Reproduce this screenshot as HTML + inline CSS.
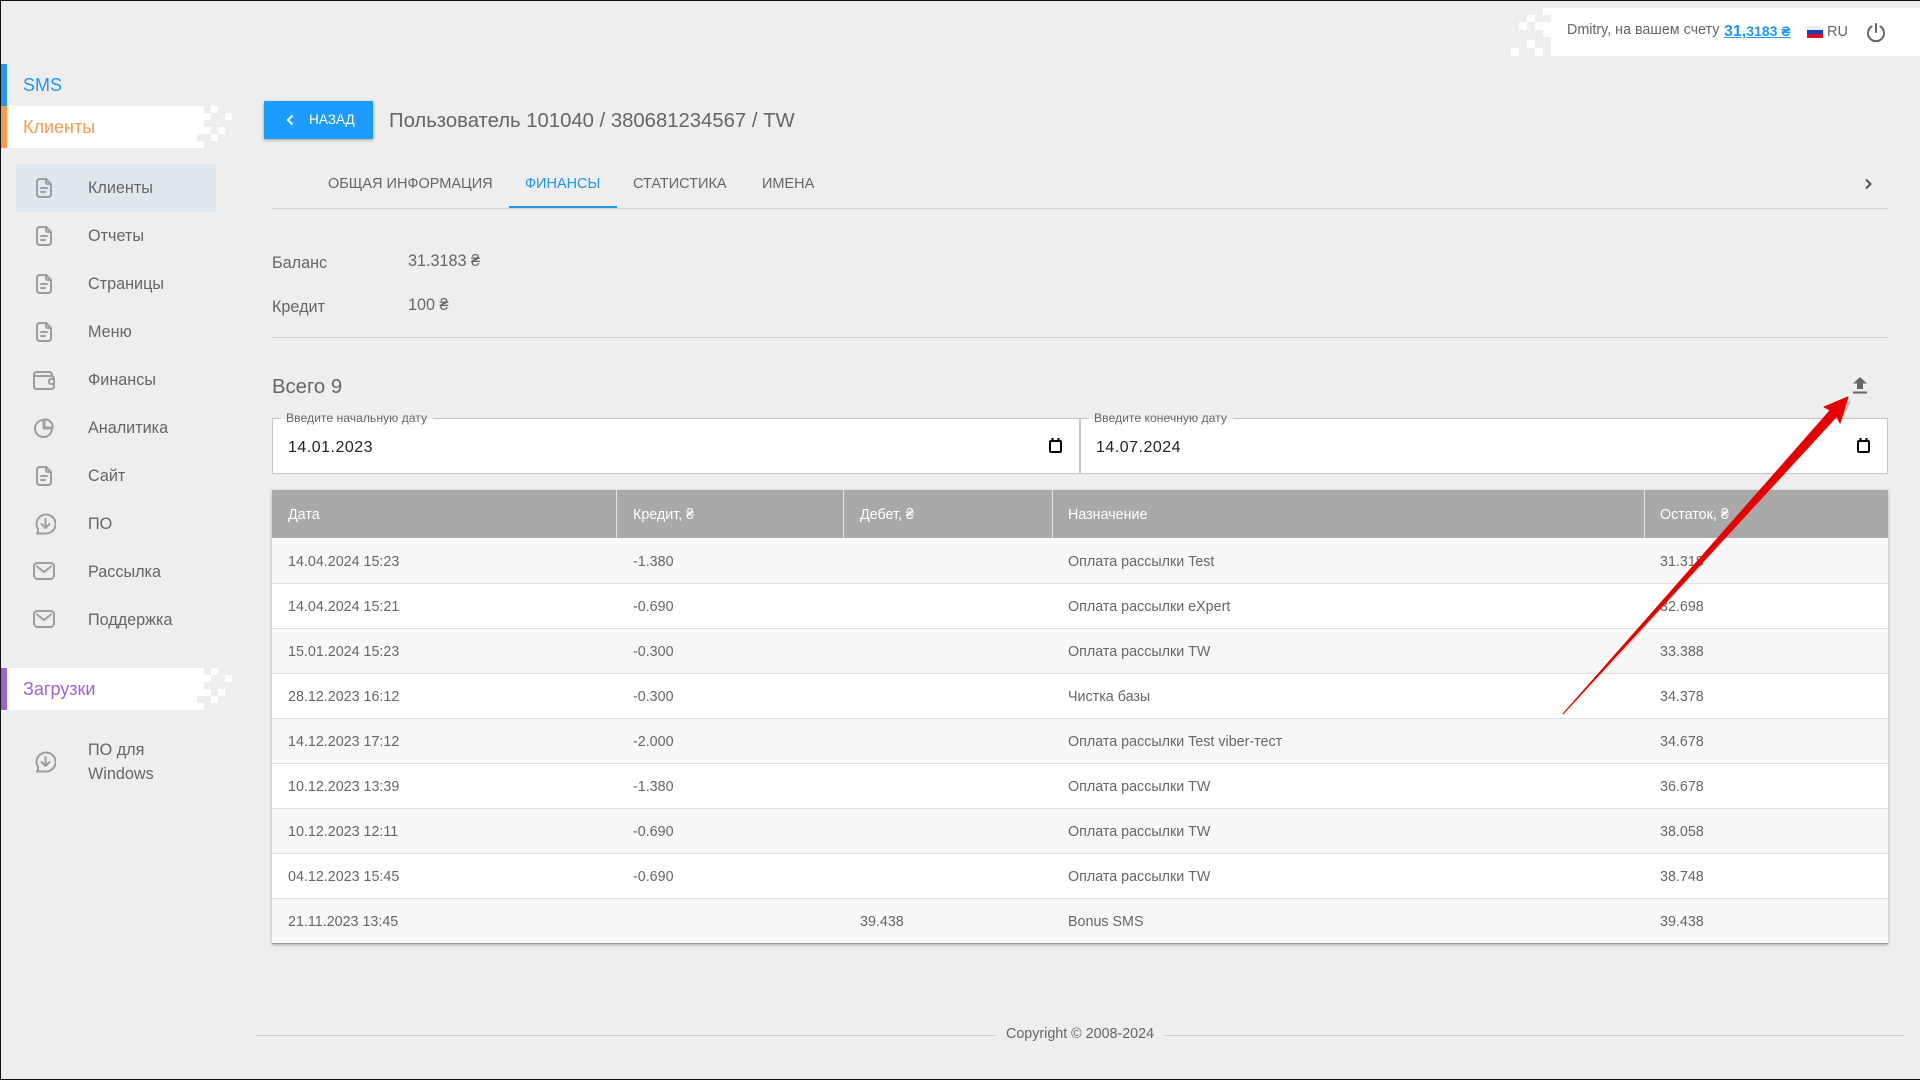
<!DOCTYPE html>
<html lang="ru">
<head>
<meta charset="utf-8">
<title>Пользователь</title>
<style>
html,body{margin:0;padding:0;}
body{width:1920px;height:1080px;position:relative;overflow:hidden;background:#eee;font-family:"Liberation Sans",Arial,sans-serif;color:#666;}
.a{position:absolute;}
.t{position:absolute;white-space:nowrap;line-height:20px;}
.w{position:absolute;background:#fff;}
.m{font-size:16.2px;left:88px;}
.ic{position:absolute;fill:none;stroke:#9e9e9e;stroke-width:2;stroke-linecap:round;stroke-linejoin:round;}
.tab{font-size:14.5px;top:174px;}
.th{font-size:14.3px;color:#fff;top:505px;}
.td{font-size:14.3px;margin-top:1px;}
.row{position:absolute;left:272px;width:1616px;height:45px;box-sizing:border-box;border-bottom:1px solid #e0e0e0;}
.sep{position:absolute;top:490px;width:1px;height:48px;background:#e8e8e8;}
</style>
</head>
<body>
<svg width="0" height="0" style="position:absolute">
<defs>
<symbol id="doc" viewBox="0 0 16 20"><path d="M4 1H10L15 6V16Q15 19 12 19H4Q1 19 1 16V4Q1 1 4 1Z"/><path d="M10 1V4Q10 6 12 6H15"/><path d="M5 10H11M5 14H9"/></symbol>
<symbol id="wal" viewBox="0 0 22 19"><path d="M19 5V4Q19 1 16 1H4Q1 1 1 4V15Q1 18 4 18H18Q21 18 21 15V13"/><path d="M1 5H18Q21 5 21 8"/><path d="M21 8H18Q16 8 16 10.500Q16 13 18 13H21Z"/></symbol>
<symbol id="pie" viewBox="0 0 20 20"><path d="M9.500 2A8.500 8.500 0 1 0 18 10.500H9.500Z"/><path d="M10.500 1.200A8.300 8.300 0 0 1 18.800 9.500H10.500Z"/></symbol>
<symbol id="dl" viewBox="0 0 21 22"><path d="M3 16A9.500 9.500 0 1 1 10.500 20.500H2Q3.500 19 3 16Z"/><path d="M10.500 6V15M6.500 11L10.500 15L14.500 11"/></symbol>
<symbol id="mail" viewBox="0 0 22 18"><rect x="1" y="1" width="20" height="16" rx="3.500"/><path d="M4 4.500L11 10L18 4.500"/></symbol>
</defs>
</svg>

<!-- window edge -->
<div class="a" style="left:0;top:0;width:1920px;height:1px;background:#111"></div>
<div class="a" style="left:0;top:0;width:1px;height:1080px;background:#111"></div>
<div class="a" style="left:0;top:1079px;width:1920px;height:1px;background:#111"></div>

<!-- top right bar -->
<div class="w" style="left:1543px;top:8px;width:377px;height:7px"></div>
<div class="w" style="left:1551px;top:15px;width:369px;height:7px"></div>
<div class="w" style="left:1535px;top:22px;width:385px;height:8px"></div>
<div class="w" style="left:1543px;top:30px;width:377px;height:7px"></div>
<div class="w" style="left:1551px;top:37px;width:369px;height:19px"></div>
<div class="w" style="left:1527px;top:15px;width:8px;height:7px"></div>
<div class="w" style="left:1519px;top:22px;width:8px;height:8px"></div>
<div class="w" style="left:1527px;top:40px;width:8px;height:8px"></div>
<div class="w" style="left:1511px;top:48px;width:8px;height:8px"></div>
<div class="w" style="left:1535px;top:48px;width:8px;height:8px"></div>
<div class="t" style="left:1567px;top:20px;font-size:14.3px">Dmitry, на вашем счету</div>
<div class="t" style="left:1724px;top:21px;font-size:16px;font-weight:700;color:#2196f3;text-decoration:underline">31,<span style="font-size:14px">3183 ₴</span></div>
<svg class="a" style="left:1807px;top:26px" width="16" height="12"><rect width="16" height="4" fill="#e8eef8"/><rect y="4" width="16" height="4" fill="#1a3fb0"/><rect y="8" width="16" height="4" fill="#d01030"/></svg>
<div class="t" style="left:1827px;top:22px;font-size:14.500px">RU</div>
<svg class="a" style="left:1866px;top:22px;fill:none;stroke:#666;stroke-width:2;stroke-linecap:round" width="20" height="20"><path d="M10 2V10"/><path d="M5.500 4.500A8 8 0 1 0 14.500 4.500"/></svg>

<!-- sidebar -->
<div class="a" style="left:1px;top:64px;width:6px;height:42px;background:#2196f3"></div>
<div class="t" style="left:23px;top:75px;font-size:18px;color:#2196f3">SMS</div>

<div class="w" style="left:7px;top:106px;width:197px;height:42px"></div>
<div class="w" style="left:204px;top:113px;width:7px;height:7px"></div>
<div class="w" style="left:204px;top:127px;width:7px;height:7px"></div>
<div class="a" style="left:197px;top:134px;width:7px;height:7px;background:#eee"></div>
<div class="w" style="left:211px;top:106px;width:7px;height:7px"></div>
<div class="w" style="left:225px;top:113px;width:7px;height:7px"></div>
<div class="w" style="left:218px;top:127px;width:7px;height:7px"></div>
<div class="w" style="left:211px;top:134px;width:7px;height:7px"></div>
<div class="a" style="left:1px;top:106px;width:6px;height:42px;background:#ff9a47"></div>
<div class="t" style="left:23px;top:117px;font-size:18px;color:#ff9a4f">Клиенты</div>

<div class="a" style="left:16px;top:164px;width:200px;height:48px;background:#dfe8ef"></div>

<svg class="ic" style="left:36px;top:178px" width="16" height="20"><use href="#doc"/></svg>
<div class="t m" style="top:178px">Клиенты</div>
<svg class="ic" style="left:36px;top:226px" width="16" height="20"><use href="#doc"/></svg>
<div class="t m" style="top:226px">Отчеты</div>
<svg class="ic" style="left:36px;top:274px" width="16" height="20"><use href="#doc"/></svg>
<div class="t m" style="top:274px">Страницы</div>
<svg class="ic" style="left:36px;top:322px" width="16" height="20"><use href="#doc"/></svg>
<div class="t m" style="top:322px">Меню</div>
<svg class="ic" style="left:33px;top:371px" width="22" height="19"><use href="#wal"/></svg>
<div class="t m" style="top:370px">Финансы</div>
<svg class="ic" style="left:34px;top:418px" width="20" height="20"><use href="#pie"/></svg>
<div class="t m" style="top:418px">Аналитика</div>
<svg class="ic" style="left:36px;top:466px" width="16" height="20"><use href="#doc"/></svg>
<div class="t m" style="top:466px">Сайт</div>
<svg class="ic" style="left:35px;top:513px" width="21" height="22"><use href="#dl"/></svg>
<div class="t m" style="top:514px">ПО</div>
<svg class="ic" style="left:33px;top:562px" width="22" height="18"><use href="#mail"/></svg>
<div class="t m" style="top:562px">Рассылка</div>
<svg class="ic" style="left:33px;top:610px" width="22" height="18"><use href="#mail"/></svg>
<div class="t m" style="top:610px">Поддержка</div>

<div class="w" style="left:7px;top:668px;width:197px;height:42px"></div>
<div class="w" style="left:204px;top:675px;width:7px;height:7px"></div>
<div class="w" style="left:204px;top:689px;width:7px;height:7px"></div>
<div class="a" style="left:197px;top:696px;width:7px;height:7px;background:#eee"></div>
<div class="w" style="left:211px;top:668px;width:7px;height:7px"></div>
<div class="w" style="left:225px;top:675px;width:7px;height:7px"></div>
<div class="w" style="left:218px;top:689px;width:7px;height:7px"></div>
<div class="w" style="left:211px;top:696px;width:7px;height:7px"></div>
<div class="a" style="left:1px;top:668px;width:6px;height:42px;background:#9c64d0"></div>
<div class="t" style="left:23px;top:679px;font-size:18px;color:#9c64d0">Загрузки</div>

<svg class="ic" style="left:35px;top:751px" width="21" height="22"><use href="#dl"/></svg>
<div class="t m" style="top:740px">ПО для</div>
<div class="t m" style="top:764px">Windows</div>

<!-- header -->
<div class="a" style="left:264px;top:101px;width:109px;height:38px;background:#1e9bff;box-shadow:0 1px 3px rgba(0,0,0,.35)"></div>
<svg class="a" style="left:285px;top:113px;fill:none;stroke:#fff;stroke-width:2;" width="10" height="14"><path d="M7.500 2.500L3 7L7.500 11.500"/></svg>
<div class="t" style="left:309px;top:110px;font-size:13.6px;color:#fff">НАЗАД</div>
<div class="t" style="left:389px;top:111px;font-size:20.3px">Пользователь 101040 / 380681234567 / TW</div>

<!-- tabs -->
<div class="t tab" style="left:328px">ОБЩАЯ ИНФОРМАЦИЯ</div>
<div class="t tab" style="left:525px;color:#2196f3">ФИНАНСЫ</div>
<div class="t tab" style="left:633px">СТАТИСТИКА</div>
<div class="t tab" style="left:762px">ИМЕНА</div>
<div class="a" style="left:272px;top:208px;width:1616px;height:1px;background:#d2d2d2"></div>
<div class="a" style="left:509px;top:206px;width:108px;height:2px;background:#2196f3"></div>
<svg class="a" style="left:1863px;top:177px;fill:none;stroke:#555;stroke-width:2" width="10" height="14"><path d="M3 2.500L7.500 7L3 11.500"/></svg>

<!-- balance -->
<div class="t" style="left:272px;top:253px;font-size:16.2px">Баланс</div>
<div class="t" style="left:408px;top:251px;font-size:16.2px">31.3183 ₴</div>
<div class="t" style="left:272px;top:297px;font-size:16.2px">Кредит</div>
<div class="t" style="left:408px;top:295px;font-size:16.2px">100 ₴</div>
<div class="a" style="left:272px;top:337px;width:1616px;height:1px;background:#d2d2d2"></div>

<!-- total -->
<div class="t" style="left:272px;top:377px;font-size:20.3px">Всего 9</div>
<svg class="a" style="left:1853px;top:377px" width="14" height="17" fill="#666"><path d="M4 12V6.500H0L7 0L14 6.500H10V12Z"/><rect y="14.500" width="14" height="2"/></svg>

<!-- date inputs -->
<div class="w" style="left:272px;top:418px;width:1616px;height:56px;box-sizing:border-box;border:1px solid #c6c6c6"></div>
<div class="a" style="left:1079px;top:418px;width:2px;height:56px;background:#c6c6c6"></div>
<div class="a" style="left:281px;top:414px;width:152px;height:5px;background:#eee"></div>
<div class="a" style="left:1089px;top:414px;width:144px;height:5px;background:#eee"></div>
<div class="t" style="left:286px;top:408px;font-size:12.2px;line-height:20px">Введите начальную дату</div>
<div class="t" style="left:1094px;top:408px;font-size:12.2px;line-height:20px">Введите конечную дату</div>
<div class="t" style="left:288px;top:438px;font-size:16px;color:#222;letter-spacing:.5px">14.01.2023</div>
<div class="t" style="left:1096px;top:438px;font-size:16px;color:#222;letter-spacing:.5px">14.07.2024</div>
<svg class="a" style="left:1049px;top:438px" width="13" height="15" fill="none" stroke="#000" stroke-width="2"><rect x="1" y="3" width="11" height="11" rx="1"/><path d="M3.500 0V3M9.500 0V3"/></svg>
<svg class="a" style="left:1857px;top:438px" width="13" height="15" fill="none" stroke="#000" stroke-width="2"><rect x="1" y="3" width="11" height="11" rx="1"/><path d="M3.500 0V3M9.500 0V3"/></svg>

<!-- table -->
<div class="a" style="left:272px;top:490px;width:1616px;height:454px;box-shadow:0 1px 3px rgba(0,0,0,.3);background:#fff"></div>
<div class="a" style="left:272px;top:490px;width:1616px;height:48px;background:#a9a9a9"></div>
<div class="sep" style="left:616px"></div>
<div class="sep" style="left:843px"></div>
<div class="sep" style="left:1052px"></div>
<div class="sep" style="left:1644px"></div>
<div class="t th" style="left:288px">Дата</div>
<div class="t th" style="left:633px">Кредит, ₴</div>
<div class="t th" style="left:860px">Дебет, ₴</div>
<div class="t th" style="left:1068px">Назначение</div>
<div class="t th" style="left:1660px">Остаток, ₴</div>

<div class="row" style="top:539px;background:#f8f8f8"></div>
<div class="row" style="top:584px;background:#fff"></div>
<div class="row" style="top:629px;background:#f8f8f8"></div>
<div class="row" style="top:674px;background:#fff"></div>
<div class="row" style="top:719px;background:#f8f8f8"></div>
<div class="row" style="top:764px;background:#fff"></div>
<div class="row" style="top:809px;background:#f8f8f8"></div>
<div class="row" style="top:854px;background:#fff"></div>
<div class="row" style="top:899px;background:#f8f8f8;border-bottom:0"></div>

<div class="t td" style="left:288px;top:551px">14.04.2024 15:23</div><div class="t td" style="left:633px;top:551px">-1.380</div><div class="t td" style="left:1068px;top:551px">Оплата рассылки Test</div><div class="t td" style="left:1660px;top:551px">31.318</div>
<div class="t td" style="left:288px;top:596px">14.04.2024 15:21</div><div class="t td" style="left:633px;top:596px">-0.690</div><div class="t td" style="left:1068px;top:596px">Оплата рассылки eXpert</div><div class="t td" style="left:1660px;top:596px">32.698</div>
<div class="t td" style="left:288px;top:641px">15.01.2024 15:23</div><div class="t td" style="left:633px;top:641px">-0.300</div><div class="t td" style="left:1068px;top:641px">Оплата рассылки TW</div><div class="t td" style="left:1660px;top:641px">33.388</div>
<div class="t td" style="left:288px;top:686px">28.12.2023 16:12</div><div class="t td" style="left:633px;top:686px">-0.300</div><div class="t td" style="left:1068px;top:686px">Чистка базы</div><div class="t td" style="left:1660px;top:686px">34.378</div>
<div class="t td" style="left:288px;top:731px">14.12.2023 17:12</div><div class="t td" style="left:633px;top:731px">-2.000</div><div class="t td" style="left:1068px;top:731px">Оплата рассылки Test viber-тест</div><div class="t td" style="left:1660px;top:731px">34.678</div>
<div class="t td" style="left:288px;top:776px">10.12.2023 13:39</div><div class="t td" style="left:633px;top:776px">-1.380</div><div class="t td" style="left:1068px;top:776px">Оплата рассылки TW</div><div class="t td" style="left:1660px;top:776px">36.678</div>
<div class="t td" style="left:288px;top:821px">10.12.2023 12:11</div><div class="t td" style="left:633px;top:821px">-0.690</div><div class="t td" style="left:1068px;top:821px">Оплата рассылки TW</div><div class="t td" style="left:1660px;top:821px">38.058</div>
<div class="t td" style="left:288px;top:866px">04.12.2023 15:45</div><div class="t td" style="left:633px;top:866px">-0.690</div><div class="t td" style="left:1068px;top:866px">Оплата рассылки TW</div><div class="t td" style="left:1660px;top:866px">38.748</div>
<div class="t td" style="left:288px;top:911px">21.11.2023 13:45</div><div class="t td" style="left:860px;top:911px">39.438</div><div class="t td" style="left:1068px;top:911px">Bonus SMS</div><div class="t td" style="left:1660px;top:911px">39.438</div>
<div class="a" style="left:272px;top:943px;width:1616px;height:1px;background:#9a9a9a"></div>

<!-- footer -->
<div class="a" style="left:256px;top:1035px;width:740px;height:1px;background:#cfcfcf"></div>
<div class="a" style="left:1164px;top:1035px;width:740px;height:1px;background:#cfcfcf"></div>
<div class="t" style="left:1006px;top:1024px;font-size:14.3px">Copyright © 2008-2024</div>

<!-- arrow -->
<svg class="a" style="left:0;top:0" width="1920" height="1080">
<polygon points="1565,716 1834,417 1840,424 1851,401 1827,410 1833,414" fill="rgba(0,0,0,.2)"/>
<polygon points="1563,714 1830.500,410 1824,407 1848,397 1840,423 1837,416" fill="#e60000" stroke="#e60000" stroke-width="1" stroke-linejoin="round"/>
</svg>
</body>
</html>
